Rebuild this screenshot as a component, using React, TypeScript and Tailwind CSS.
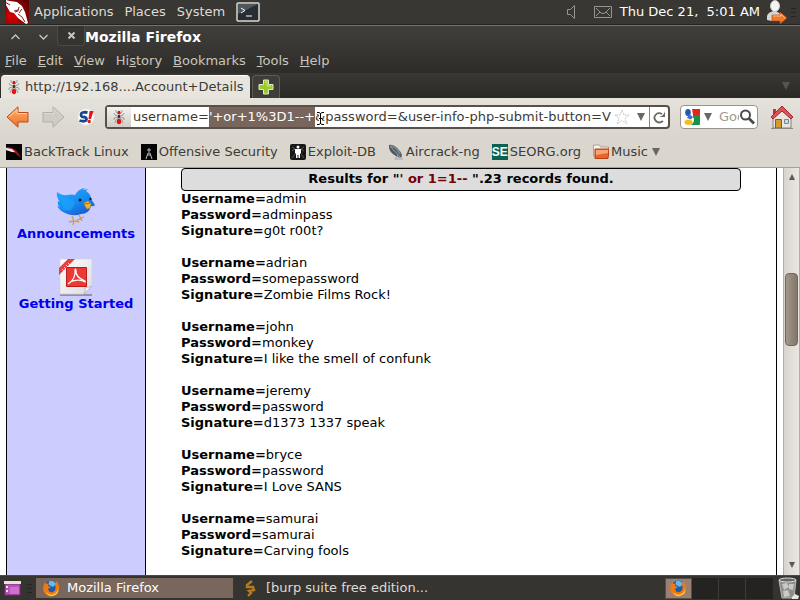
import { useEffect, useRef, type ReactNode } from "react";

function BackTrackLogo() {
  return (
    <svg width="24" height="24" viewBox="0 0 24 24" aria-hidden="true">
      <defs>
        <radialGradient id="dragon" cx=".3" cy=".7" r=".9">
          <stop offset="0" stopColor="#d80000" />
          <stop offset="1" stopColor="#5d0000" />
        </radialGradient>
      </defs>
      <path d="M0 0h24v23H0z" fill="url(#dragon)" />
      <path d="M1 0l4 1 7 1 5 4 3 6 3 11-2 1-8-6-4-5-4-1-4-7z" fill="#fff" />
      <path d="M0 2l5 3M10 12l3-1 1-4M9 11l4-1M13 14l4 3 3 5M17 9l-3 4" stroke="#7a0505" strokeWidth=".9" fill="none" />
    </svg>
  );
}

function TerminalIcon() {
  return (
    <svg width="24" height="20" viewBox="0 0 24 20" aria-hidden="true">
      <rect x="1" y="1" width="22" height="18" rx="1" fill="#282d33" stroke="#d7d7d2" strokeWidth="1.500" />
      <path d="M2 2h20L2 12z" fill="#50565d" />
      <path d="M5 6l4 2.500-4 2.500M10 14h6" stroke="#fff" fill="none" />
    </svg>
  );
}

function SpeakerIcon() {
  return (
    <svg width="9" height="14" viewBox="0 0 9 14" fill="none" stroke="#96958f" aria-hidden="true">
      <path d="M.5 4.500h3l4-4v13l-4-4h-3z" />
    </svg>
  );
}

function MailIcon() {
  return (
    <svg width="18" height="12" viewBox="0 0 18 12" fill="none" stroke="#96958f" aria-hidden="true">
      <path d="M.5.5h17v11H.5zM2 2l5 5q2 1 4 0l5-5M2 10l4-4M16 10l-4-4" />
    </svg>
  );
}

function UserIcon() {
  return (
    <svg width="22" height="24" viewBox="0 0 22 24" aria-hidden="true">
      <path d="M1 20v-4q1-4 7-5 7 1 7 6v3q-7 2-14 0" fill="#d5d5d3" />
      <ellipse cx="9" cy="6" rx="4.500" ry="5.500" fill="#f4f4f3" stroke="#c7c7c5" />
      <path d="M6 15h8v-3l7 6-7 6v-3H6z" fill="#ee7a2d" stroke="#b94510" strokeWidth=".6" />
      <path d="M7 16h8v-2l4 4" stroke="#ffb985" fill="none" />
    </svg>
  );
}

function Ant() {
  return (
    <svg width="16" height="16" viewBox="0 0 16 16" aria-hidden="true">
      <path d="M7 5L5 3V1M9 5l2-2V1M7 7L4 6 3 4M9 7l3-1 1-2M7 8l-4 1v2M9 8l4 1v2M7 9l-2 2-1 3M9 9l2 2 1 3" fill="none" stroke="#8a8a8a" strokeWidth=".8" />
      <ellipse cx="8" cy="3.500" rx="1.500" ry="1.800" fill="#d31212" />
      <ellipse cx="8" cy="7.500" rx="1.200" ry="2" fill="#4b2c2c" />
      <ellipse cx="8" cy="12.500" rx="2.200" ry="2.800" fill="#e81212" />
    </svg>
  );
}

function PlusIcon() {
  return (
    <svg width="16" height="16" viewBox="0 0 16 16" aria-hidden="true">
      <path d="M5.500 1h5v4.500H15v5h-4.500V15h-5v-4.500H1v-5h4.500z" fill="#9ccb2e" stroke="#dfecc0" />
      <path d="M7 3h2v4h4" stroke="#c9e67a" fill="none" />
    </svg>
  );
}

function Arrow({ forward = false }: { forward?: boolean }) {
  return (
    <svg width="23" height="22" viewBox="0 0 23 22" className={forward ? "-scale-x-100" : ""} aria-hidden="true">
      <defs>
        <linearGradient id="orange" x2="0" y2="1">
          <stop stopColor="#fbb46c" />
          <stop offset="1" stopColor="#ec6d2c" />
        </linearGradient>
      </defs>
      <path d="M1 11L12 .8v5.700h10v9.500H12v5.200z" fill={forward ? "#cfcbc5" : "url(#orange)"} stroke={forward ? "#b3afa8" : "#c04a17"} strokeLinejoin="round" />
      <path d="M3 11l8-7.500v4h10" fill="none" stroke={forward ? "#dedad4" : "#ffd2a3"} />
    </svg>
  );
}

function ScriptIcon() {
  return (
    <svg width="18" height="18" viewBox="0 0 18 18" aria-hidden="true">
      <circle cx="9" cy="9" r="8" fill="#fff" stroke="#ececec" />
      <path d="M10.500 4.500Q4 3.500 4 6.500T7.500 9q3 1.500 1.500 3.500-2 1.500-6.500 0" fill="none" stroke="#17458e" strokeWidth="2.800" />
      <path d="M12.500 3h4l-2.500 8h-2.500z" fill="#e3171b" />
      <circle cx="12.200" cy="13.500" r="1.700" fill="#e3171b" />
    </svg>
  );
}

function Triangle({ color = "#6a6861" }: { color?: string }) {
  return (
    <svg width="8" height="8" viewBox="0 0 8 8" aria-hidden="true">
      <path d="M0 0h8L4 8z" fill={color} />
    </svg>
  );
}

function SmallTriangle({ up = false }: { up?: boolean }) {
  return (
    <svg width="6" height="6" viewBox="0 0 6 6" className={up ? "-scale-y-100" : ""} aria-hidden="true">
      <path d="M0 0h6L3 6z" fill="#5a5854" />
    </svg>
  );
}

function StarIcon() {
  return (
    <svg width="16" height="16" viewBox="0 0 16 16" aria-hidden="true">
      <path d="M8 1l2 5h5.200L11 9.500l1.700 5.300L8 11.500l-4.700 3.300L5 9.500.8 6H6z" fill="#fff" stroke="#c6c6c6" strokeDasharray="2 1" />
    </svg>
  );
}

function ReloadIcon() {
  return (
    <svg width="13" height="13" viewBox="0 0 13 13" aria-hidden="true">
      <path d="M9 3Q5 1 2.500 4T3 10t7 0" fill="none" stroke="#6b6860" strokeWidth="1.800" />
      <path d="M12 0v6H6q5-1 6-6" fill="#6b6860" />
    </svg>
  );
}

function GoogleIcon() {
  return (
    <svg width="16" height="16" viewBox="0 0 16 16" aria-hidden="true">
      <path d="M8 0h8v6H9z" fill="#e1261c" />
      <path d="M9 6h7v9q0 1-1 1H7q5-4 2-8z" fill="#149447" />
      <ellipse cx="4" cy="3.500" rx="2.800" ry="3.500" fill="#2757b5" />
      <path d="M5 5l4 3-2 2.500-4-1.500" fill="#3d71cc" />
      <ellipse cx="4.500" cy="13.200" rx="4" ry="2.600" fill="#f7bb1b" />
    </svg>
  );
}

function SearchIcon() {
  return (
    <svg width="16" height="16" viewBox="0 0 16 16" fill="none" stroke="#4b4a47" aria-hidden="true">
      <circle cx="6.500" cy="6" r="4.500" strokeWidth="2" />
      <path d="M10 9.500l5 5" strokeWidth="2.800" />
    </svg>
  );
}

function HomeIcon() {
  return (
    <svg width="24" height="24" viewBox="0 0 24 24" aria-hidden="true">
      <path d="M3 11L12 3l9 8v12H3z" fill="#e9e6df" stroke="#85827a" />
      <path d="M3 4h3v5H3z" fill="#b83b3b" />
      <path d="M1 12L12 1l11 11-2 2-9-8-9 8z" fill="#d95358" stroke="#a72a31" strokeLinejoin="round" />
      <path d="M5.500 14.500h6V23h-6z" fill="#d29a31" stroke="#8a5d13" />
      <path d="M14.500 14.500h4v4h-4z" fill="#c3dae6" stroke="#728b98" />
      <path d="M1 23.500h22" stroke="#8a8780" />
    </svg>
  );
}

function BirdIcon() {
  return (
    <svg width="40" height="39" viewBox="0 0 40 39" aria-hidden="true">
      <defs>
        <linearGradient id="feathers" x2=".7" y2="1">
          <stop stopColor="#21b2ff" />
          <stop offset=".6" stopColor="#168af0" />
          <stop offset="1" stopColor="#1b5bcf" />
        </linearGradient>
      </defs>
      <path d="M16 29l2 5-5 1m5-1-1 4m2-4 4 1M23 28l2 4-4 1m4-1 1 2m-1-3 3-1" stroke="#cfa13a" strokeWidth="1.300" fill="none" />
      <path d="M1 5q6 4 10 3 5-1 8 0Q22 2 29 1l-2 2 5-1-2 2q5 3 5 8l4 6q-2 2-4 1-2 8-10 8-8 3-16-1-5-2-8-7l3 1Q1 18 2 14l2 1Q0 10 1 5z" fill="url(#feathers)" />
      <path d="M4 9q7 4 13 3 3 6-2 11-5 1-8-1" fill="#1ca3fb" opacity=".7" />
      <path d="M28 16l4-2 3 3-1 4-3 1-2-3z" fill="#efb52d" stroke="#b8872e" strokeWidth=".7" />
      <path d="M29 17l5-1" stroke="#9f7333" />
      <circle cx="24" cy="13" r="1.500" fill="#111d35" />
      <circle cx="34.500" cy="12" r="1.200" fill="#111d35" />
    </svg>
  );
}

function PdfIcon() {
  return (
    <svg width="36" height="38" viewBox="0 0 36 38" aria-hidden="true">
      <defs>
        <linearGradient id="sheet" x2="1" y2="1">
          <stop stopColor="#fff" />
          <stop offset="1" stopColor="#dcdce0" />
        </linearGradient>
      </defs>
      <path d="M2 37h32" stroke="#8f8fae" strokeWidth="2" />
      <path d="M2 1h32v27l-8 8H2z" fill="url(#sheet)" stroke="#d0d0d5" strokeWidth=".7" />
      <path d="M26 36q2-3 1-7 4 1 7-1z" fill="#f7f7f7" stroke="#a7a7aa" strokeWidth=".7" />
      <path d="M8.500 9.500h20v19h-20z" fill="#ec3a33" stroke="#bd1b19" />
      <path d="M10 26q8-5 7-14 0-2 1 0-1 7 9 11 1 2-2 0-6-2-13 1" fill="none" stroke="#fff" strokeWidth="1.200" />
      <path d="M1 10L10 1h7L1 17z" fill="#e54040" />
      <path d="M4 11l2 2m0-4 2 2m0-4 2 2m0-4 2 2" stroke="#fff" strokeWidth=".8" />
    </svg>
  );
}

function FirefoxIcon() {
  return (
    <svg width="17" height="17" viewBox="0 0 17 17" aria-hidden="true">
      <circle cx="8.500" cy="8" r="7.500" fill="#215aa5" />
      <path d="M6 1q5-1 7 3l-3 3-4-2" fill="#65b9e8" />
      <path d="M1 4L3 2v2l3-1-1 3 3 1-3 2q1 4 5 3 4-2 2-7l1-4q4 4 3 8-2 7-8 7-7 0-8-7z" fill="#ee7a15" />
      <path d="M3 12q4 4 8 2 4-2 4-6 2 6-5 8-5 1-7-4" fill="#ffc835" />
    </svg>
  );
}

function BurpIcon() {
  return (
    <svg width="12" height="17" viewBox="0 0 12 17" aria-hidden="true">
      <path d="M8 1L3 5v2h6l1 3-5 1 2 2-3 3" fill="none" stroke="#b77a1f" strokeWidth="2.400" />
    </svg>
  );
}

function DesktopIcon() {
  return (
    <svg width="17" height="15" viewBox="0 0 17 15" aria-hidden="true">
      <path d="M1 3h15v11H1z" fill="#b951bb" stroke="#793077" />
      <path d="M0 0h17v3H0z" fill="#e8e5d0" />
      <path d="M2 5h2v2H2zm0 4h2v2H2z" fill="#f4def4" />
      <path d="M6 6h9v7H6z" fill="#cf70cf" />
    </svg>
  );
}

function TrashIcon() {
  return (
    <svg width="21" height="22" viewBox="0 0 21 22" aria-hidden="true">
      <path d="M1 3h17l-2 18H4z" fill="#8c8e8b" stroke="#b9bab8" />
      <ellipse cx="9.500" cy="3" rx="8.500" ry="2" fill="#666865" stroke="#e0e0df" />
      <path d="M4 7l5-1 2 4-5 3zM11 7l5 0-1 6-4-1zM5 14l5-1 2 6-6 1z" fill="#c9cac8" />
      <path d="M14 20l3-3 4 2-1 3h-6z" fill="#e5e5e4" />
    </svg>
  );
}

function Grip() {
  return (
    <svg width="5" height="9" viewBox="0 0 5 9" aria-hidden="true">
      <path d="M0 .5h5M0 4.500h5M0 8.500h5" stroke="#252422" />
    </svg>
  );
}

const bookmarkIcons = {
  backtrack: (
    <svg width="16" height="16" viewBox="0 0 16 16" aria-hidden="true">
      <path d="M0 0h16v16H0z" fill="#050505" />
      <path d="M0 3q10-1 15 11l-6-5-9-3z" fill="#a51520" />
      <path d="M0 4l6 1 3 3-3 0-6-2z" fill="#eee" />
    </svg>
  ),
  offensive: (
    <svg width="16" height="16" viewBox="0 0 16 16" aria-hidden="true">
      <path d="M0 0h16v16H0z" fill="#050505" />
      <path d="M8 4v6M6 6h4M7 9l-2 6M9 9l2 6M6 11h4" stroke="#bbb" fill="none" />
    </svg>
  ),
  exploit: (
    <svg width="16" height="16" viewBox="0 0 16 16" aria-hidden="true">
      <rect width="16" height="16" rx="2" fill="#171717" />
      <path d="M2 3l3 2-3 2m12-4-3 2 3 2M2 14l3-4m9 4-3-4" stroke="#555" fill="none" />
      <circle cx="8" cy="3" r="1.500" fill="#fff" />
      <path d="M5 5h6v4l-1 1v4H8.500v-3h-1v3H6v-4L5 9z" fill="#fff" />
    </svg>
  ),
  aircrack: (
    <svg width="16" height="16" viewBox="0 0 16 16" aria-hidden="true">
      <path d="M1 1Q0 10 13 14q3-3-3-9Q5 0 1 1z" fill="#505963" />
      <path d="M2 2l11 12M10 11l-3 4h8" stroke="#9da4aa" fill="none" />
      <path d="M3 2q5 0 9 8" stroke="#7b858e" fill="none" strokeWidth="2" />
    </svg>
  ),
  seorg: (
    <span className="flex h-4 w-4 items-center justify-center overflow-hidden bg-[#0b6253] font-['Liberation_Sans',sans-serif] text-xs font-bold text-white" aria-hidden="true">SE</span>
  ),
  music: (
    <svg width="16" height="16" viewBox="0 0 16 16" aria-hidden="true">
      <path d="M.5 1h6l1 2h8v9H.5z" fill="#f5f3ef" stroke="#aaa49b" />
      <path d="M2 5h14l-1 9.500H2z" fill="#e5662c" stroke="#bd3d12" />
      <path d="M3 6h12v3L3 11z" fill="#f6a570" />
    </svg>
  ),
};

const bookmarks: { label: string; icon: ReactNode; folder?: boolean }[] = [
  { label: "BackTrack Linux", icon: bookmarkIcons.backtrack },
  { label: "Offensive Security", icon: bookmarkIcons.offensive },
  { label: "Exploit-DB", icon: bookmarkIcons.exploit },
  { label: "Aircrack-ng", icon: bookmarkIcons.aircrack },
  { label: "SEORG.org", icon: bookmarkIcons.seorg },
  { label: "Music", icon: bookmarkIcons.music, folder: true },
];

const records = [
  ["admin", "adminpass", "g0t r00t?"],
  ["adrian", "somepassword", "Zombie Films Rock!"],
  ["john", "monkey", "I like the smell of confunk"],
  ["jeremy", "password", "d1373 1337 speak"],
  ["bryce", "password", "I Love SANS"],
  ["samurai", "samurai", "Carving fools"],
];

function DesktopPanel() {
  return (
    <header className="flex h-6 shrink-0 items-center bg-[#383733] pr-1 pl-[5px] text-[#dfdbd2]">
      <BackTrackLogo />
      <nav className="ml-[5px] flex flex-1 items-center gap-[11px]">
        <button>Applications</button>
        <button>Places</button>
        <button>System</button>
        <button aria-label="Terminal"><TerminalIcon /></button>
      </nav>
      <div className="flex items-center">
        <button aria-label="Volume" className="mr-[18px]"><SpeakerIcon /></button>
        <button aria-label="Messages" className="mr-2"><MailIcon /></button>
        <time className="mr-[6px] whitespace-pre text-white">Thu Dec 21,  5:01 AM</time>
        <button aria-label="User" className="mr-[3px]"><UserIcon /></button>
        <Grip />
      </div>
    </header>
  );
}

function TitleAndMenu() {
  return (
    <div className="shrink-0 border-t border-[#74726b] bg-linear-to-b from-[#403f3b] to-[#2d2c29]">
      <div className="flex h-[22px] items-center text-[#c9c6bf]">
        <button aria-label="Maximize" className="flex w-[30px] justify-center">
          <svg width="9" height="6" viewBox="0 0 9 6" fill="none" stroke="currentColor" strokeWidth="1.300"><path d="M.5 5L4.500 1l4 4" /></svg>
        </button>
        <button aria-label="Minimize" className="flex w-[27px] justify-center">
          <svg width="9" height="6" viewBox="0 0 9 6" fill="none" stroke="currentColor" strokeWidth="1.300"><path d="M.5 1l4 4 4-4" /></svg>
        </button>
        <button aria-label="Close" className="flex h-5 w-7 items-center justify-center self-start rounded-b border-x border-b border-[#4b4a46] bg-[#353430]">
          <svg width="7" height="7" viewBox="0 0 7 7" stroke="currentColor" strokeWidth="2"><path d="M.5.5l6 6m0-6l-6 6" /></svg>
        </button>
        <h1 className="text-sm font-bold text-white">Mozilla Firefox</h1>
      </div>
      <nav className="flex h-[25px] items-center gap-[11px] pl-[5px] text-[#c9c5ba]">
        <button><u>F</u>ile</button>
        <button><u>E</u>dit</button>
        <button><u>V</u>iew</button>
        <button>Hi<u>s</u>tory</button>
        <button><u>B</u>ookmarks</button>
        <button><u>T</u>ools</button>
        <button><u>H</u>elp</button>
      </nav>
    </div>
  );
}

function TabStrip() {
  return (
    <div className="flex h-[25px] shrink-0 items-end bg-linear-to-b from-[#383733] to-[#2b2a27] pl-px">
      <button className="flex h-[23px] w-[249px] items-center gap-[3px] rounded-t border-t border-white bg-[#e8e5df] pl-[5px] whitespace-nowrap text-[#3c3b37]">
        <Ant />
        http://192.168....Account+Details
      </button>
      <button aria-label="New tab" className="ml-0.5 flex h-[23px] w-7 items-center justify-center rounded-t border border-b-0 border-[#5d5c57] bg-[#3e3d39]">
        <PlusIcon />
      </button>
      <button aria-label="List all tabs" className="mr-[10px] mb-2 ml-auto"><Triangle color="#55544f" /></button>
    </div>
  );
}

function NavigationBar() {
  const address = useRef<HTMLInputElement>(null);

  useEffect(() => {
    const input = address.current;
    if (!input) return;
    input.focus({ preventScroll: true });
    input.setSelectionRange(9, 22, "backward");
    input.scrollLeft = 0;
    const frame = requestAnimationFrame(() => {
      input.scrollLeft = 0;
    });
    return () => cancelAnimationFrame(frame);
  }, []);

  return (
    <div className="flex h-[38px] shrink-0 items-center bg-linear-to-b from-[#e5e2dc] to-[#dad6ce] pr-[6px] pl-[6px]">
      <button aria-label="Back" className="mr-[13px]"><Arrow /></button>
      <button aria-label="Forward" className="mr-3"><Arrow forward /></button>
      <button aria-label="Script options" className="mr-[10px]"><ScriptIcon /></button>
      <div className="relative flex h-6 min-w-0 flex-1 items-center rounded-sm border-2 border-[#5b5048] bg-white">
        <button aria-label="Site identity" className="flex h-5 w-6 shrink-0 items-center justify-center bg-linear-to-b from-[#f3f2f0] to-[#d1cec8]"><Ant /></button>
        <input
          ref={address}
          aria-label="Address"
          className="ml-0.5 h-5 min-w-0 flex-1 bg-transparent p-0 text-[#3c3b37] caret-transparent outline-none selection:bg-[#78665d] selection:text-white"
          defaultValue="username='+or+1%3D1--+&password=&user-info-php-submit-button=View+Account+Details"
        />
        <svg className="pointer-events-none absolute top-1 left-[209px]" width="9" height="15" viewBox="0 0 9 15" fill="none" aria-hidden="true">
          <path d="M1 1.500h2l1.500 1L6 1.500h2M4.500 2v11M1 13.500h2l1.500-1 1.500 1h2M3 7.500h3" stroke="#fff" strokeWidth="3" />
          <path d="M1 1.500h2l1.500 1L6 1.500h2M4.500 2v11M1 13.500h2l1.500-1 1.500 1h2M3 7.500h3" stroke="#000" />
        </svg>
        <button aria-label="Bookmark this page" className="ml-[3px]"><StarIcon /></button>
        <button aria-label="History list" className="mr-1 ml-[7px]"><Triangle /></button>
        <button aria-label="Reload" className="flex h-5 w-[19px] items-center justify-center border-l border-[#8b857e]"><ReloadIcon /></button>
      </div>
      <div className="ml-[10px] flex h-6 w-[78px] items-center rounded-sm border border-[#9b9389] bg-white pr-0.5 pl-[3px]">
        <button aria-label="Search engine" className="flex items-center gap-1"><GoogleIcon /><Triangle /></button>
        <input aria-label="Search" placeholder="Google" className="ml-[7px] min-w-0 flex-1 bg-transparent p-0 outline-none placeholder:text-[#9d9b94]" />
        <button aria-label="Search the web"><SearchIcon /></button>
      </div>
      <button aria-label="Home" className="ml-3"><HomeIcon /></button>
    </div>
  );
}

function BookmarksBar() {
  return (
    <nav className="flex h-8 shrink-0 items-center gap-3 border-b border-[#aaa096] bg-[#dad6ce] pl-[6px] text-[#3c3b37]">
      {bookmarks.map((b) => (
        <a key={b.label} href="#" className="flex items-center gap-0.5 whitespace-nowrap">
          {b.icon}
          {b.label}
          {b.folder && <span className="ml-0.5"><Triangle /></span>}
        </a>
      ))}
    </nav>
  );
}

function PageContent() {
  return (
    <div className="flex min-h-0 flex-1 bg-white leading-4 text-black">
      <main className="mr-[6px] ml-[6px] flex min-w-0 flex-1 overflow-hidden border-x border-black">
        <aside className="flex w-[139px] shrink-0 flex-col items-center gap-4 border-r border-black bg-[#ccccff] pt-[19px] font-bold text-[#0000ee]">
          <a href="#" className="flex flex-col items-center"><BirdIcon />Announcements</a>
          <a href="#" className="flex flex-col items-center"><PdfIcon />Getting Started</a>
        </aside>
        <section className="mr-[35px] ml-[35px] min-w-0 flex-1">
          <h2 className="flex h-[23px] justify-center rounded border border-black bg-[#dddddd] pt-0.5 font-bold">
            <span>Results for "<span className="text-[#770000]">' or 1=1-- </span>".23 records found.</span>
          </h2>
          {records.map(([user, password, signature]) => (
            <dl key={user} className="mb-4">
              <div className="flex"><dt className="font-bold">Username=</dt><dd>{user}</dd></div>
              <div className="flex"><dt className="font-bold">Password=</dt><dd>{password}</dd></div>
              <div className="flex"><dt className="font-bold">Signature=</dt><dd>{signature}</dd></div>
            </dl>
          ))}
        </section>
      </main>
      <div className="flex w-[17px] shrink-0 flex-col items-center border-x border-[#b5ada4] bg-linear-to-r from-[#d8d4cd] to-[#ebe8e3] pt-[6px] pb-[7px]">
        <button aria-label="Scroll up"><SmallTriangle up /></button>
        <div className="flex w-full flex-1 flex-col items-center">
          <span className="grow-[92]" />
          <span className="h-[73px] w-[13px] rounded border border-[#70675b] bg-linear-to-r from-[#a1988b] to-[#81786a]" />
          <span className="grow-[214]" />
        </div>
        <button aria-label="Scroll down"><SmallTriangle /></button>
      </div>
    </div>
  );
}

function Taskbar() {
  return (
    <footer className="flex h-[25px] shrink-0 items-center border-t border-[#4b4a46] bg-[#353430] pl-1 text-[#dfdbd2]">
      <button aria-label="Show desktop" className="mr-[6px]"><DesktopIcon /></button>
      <Grip />
      <button className="ml-1 flex h-5 w-[197px] items-center gap-[7px] bg-[#79665d] pl-[7px] text-white"><FirefoxIcon />Mozilla Firefox</button>
      <button className="ml-[11px] flex items-center gap-[10px] whitespace-nowrap"><BurpIcon />[burp suite free edition...</button>
      <div className="mr-[5px] ml-auto flex h-[21px] w-[108px] divide-x divide-[#3c3b37] bg-[#242321]">
        <button aria-label="Workspace 1" className="flex w-[27px] items-center justify-center border border-[#53504b] bg-[#9a8073]"><FirefoxIcon /></button>
        <button aria-label="Workspace 2" className="w-[27px]" />
        <button aria-label="Workspace 3" className="w-[27px]" />
        <button aria-label="Workspace 4" className="w-[27px]" />
      </div>
      <button aria-label="Trash" className="mr-px"><TrashIcon /></button>
    </footer>
  );
}

export default function App() {
  return (
    <div className="flex h-screen flex-col overflow-hidden bg-[#383733] font-['DejaVu_Sans',sans-serif] text-[13px] leading-5">
      <DesktopPanel />
      <div className="h-px shrink-0 bg-[#252422]" />
      <TitleAndMenu />
      <TabStrip />
      <NavigationBar />
      <BookmarksBar />
      <PageContent />
      <Taskbar />
    </div>
  );
}
